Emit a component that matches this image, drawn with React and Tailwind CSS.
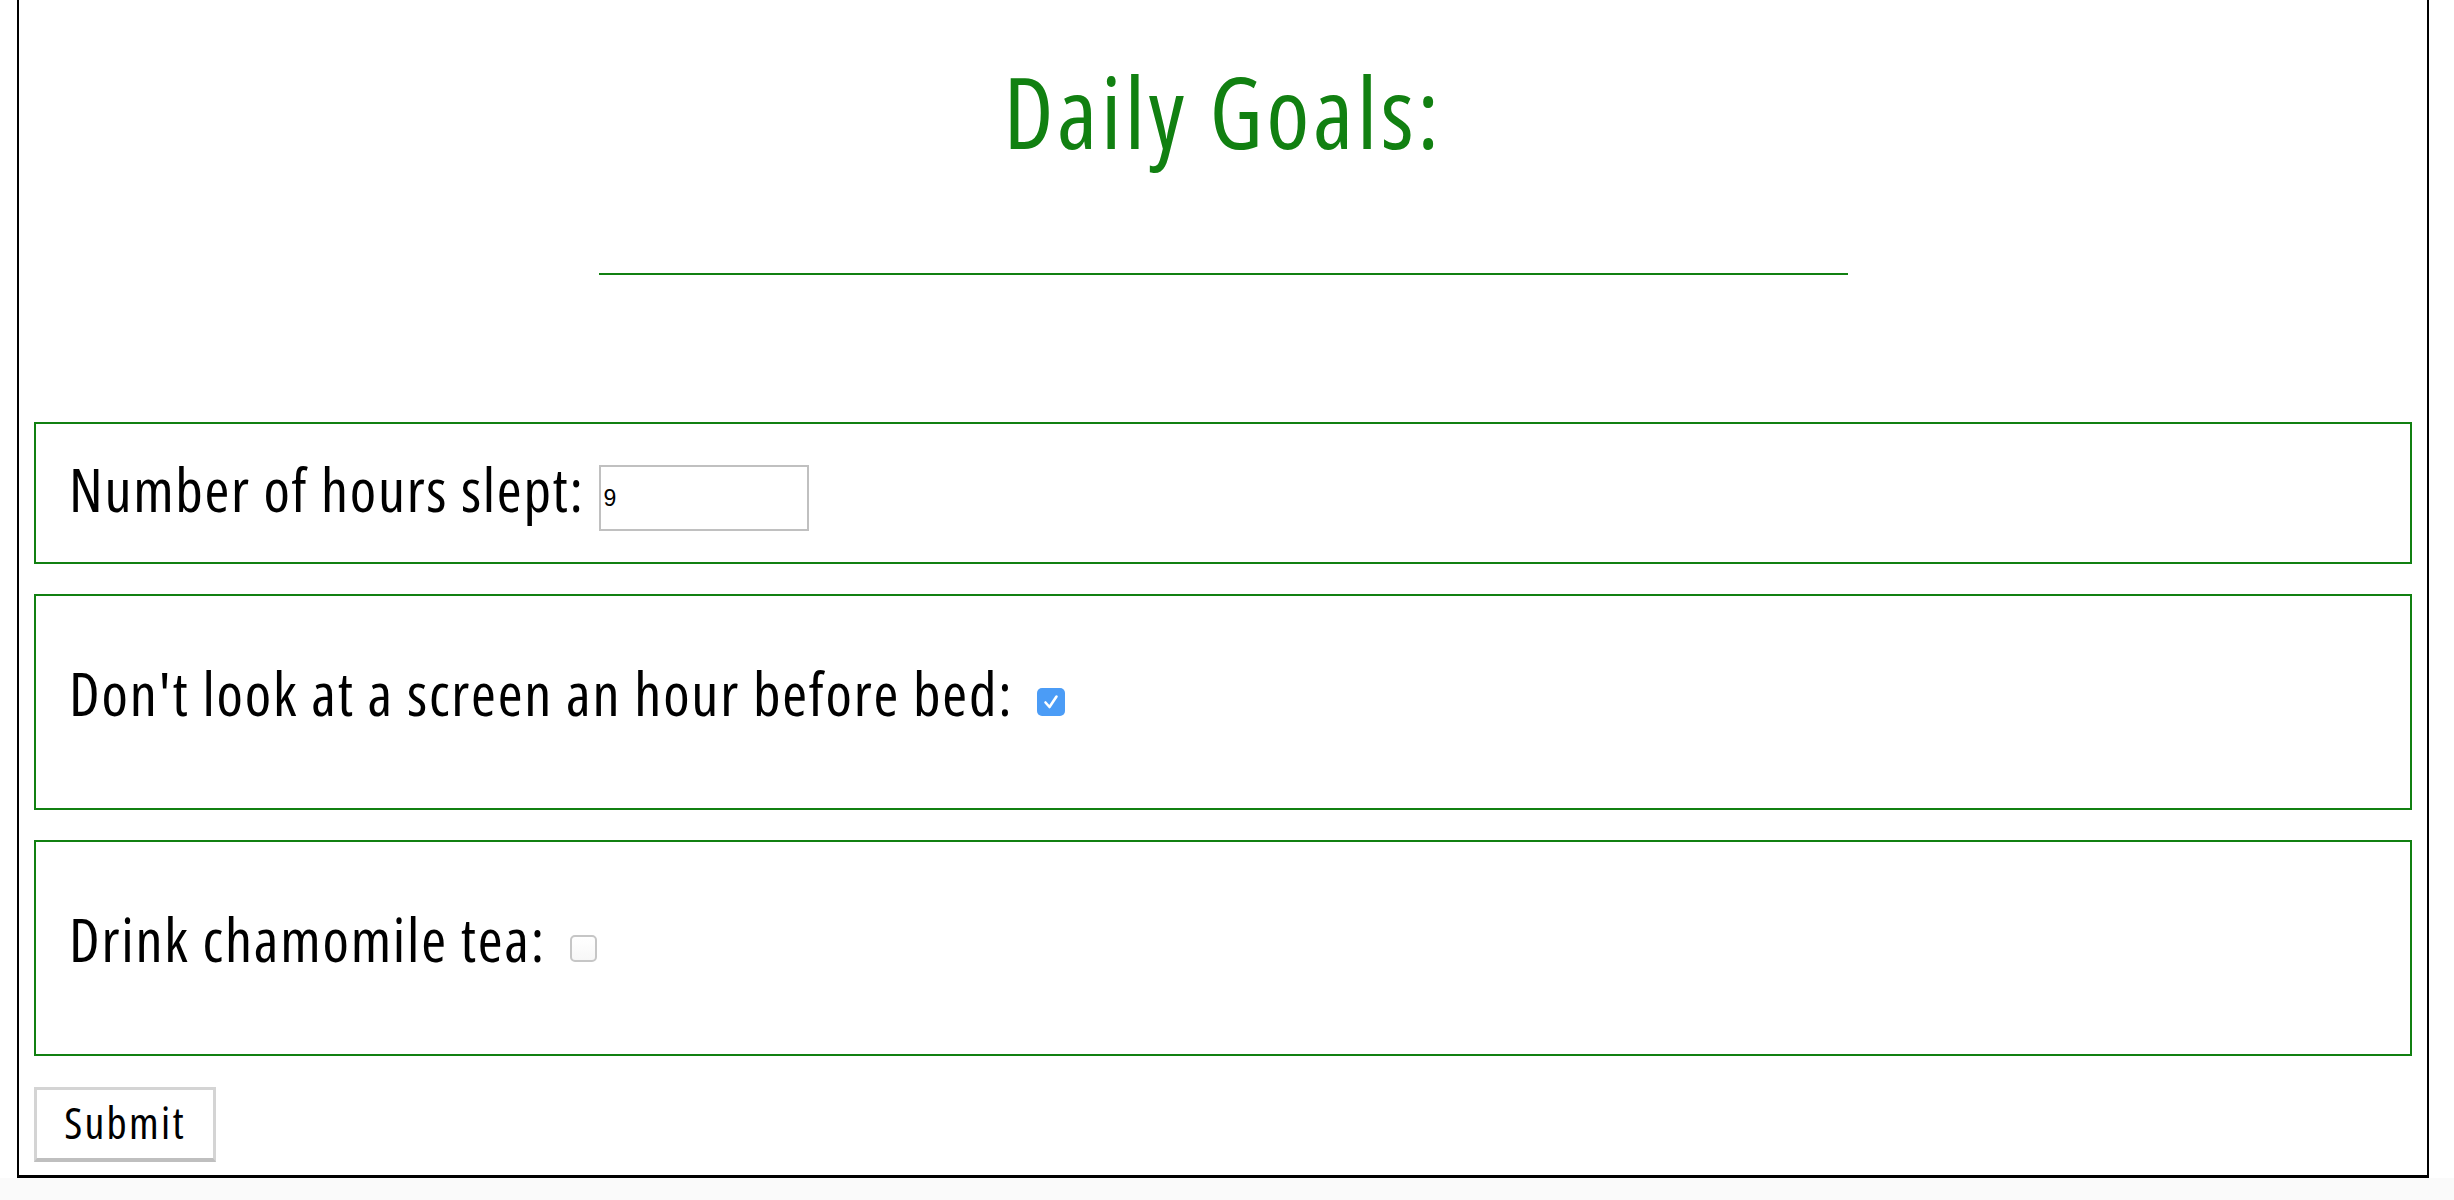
import React, { useState } from "react";

function CheckBox({ checked, onChange }) {
  if (checked) {
    return (
      <button
        type="button"
        onClick={() => onChange(false)}
        className="ml-[24px] flex h-[28px] w-[28px] shrink-0 items-center justify-center rounded-[5px] bg-[#4b9cf6]"
      >
        <svg viewBox="0 0 28 28" className="h-[28px] w-[28px]" fill="none">
          <path
            d="M8.5 14.5 L12.5 19 L19.5 8.5"
            stroke="white"
            strokeWidth="2.6"
            strokeLinecap="round"
            strokeLinejoin="round"
          />
        </svg>
      </button>
    );
  }
  return (
    <button
      type="button"
      onClick={() => onChange(true)}
      className="ml-[24px] h-[27px] w-[27px] shrink-0 rounded-[5px] border-2 border-[#c6c6c6] bg-gradient-to-b from-white to-[#f7f7f7]"
    />
  );
}

export default function App() {
  const [hours, setHours] = useState("9");
  const [noScreen, setNoScreen] = useState(true);
  const [tea, setTea] = useState(false);

  return (
    <div className="flex h-[1200px] w-full flex-col overflow-hidden bg-white font-['Open_Sans',sans-serif] font-stretch-condensed">
      <div className="ml-[17px] flex h-[1178px] w-[2412px] shrink-0 flex-col border-x-2 border-b-[3px] border-black bg-white px-[15px]">
        <h1 className="mt-[62px] text-center text-[98px] font-normal leading-none tracking-[3.6px] text-[#118011]">
          Daily Goals:
        </h1>
        <div className="mx-auto mt-[113px] h-[2px] w-[1249px] bg-[#118011]" />

        <form className="mt-[147px] flex flex-col gap-[30px] text-black" onSubmit={(e) => e.preventDefault()}>
          {/* hours slept */}
          <div className="flex h-[142px] items-center border-2 border-[#118011] pl-[33px]">
            <span className="mb-[8px] text-[60px] leading-normal tracking-[1.7px]">Number of hours slept:</span>
            <input
              value={hours}
              onChange={(e) => setHours(e.target.value)}
              className="ml-[14px] mt-[10px] h-[66px] w-[210px] border-2 border-[#c0c0c0] px-[3px] font-['Liberation_Sans',sans-serif] text-[23px] tracking-normal text-black outline-none font-stretch-normal"
            />
          </div>

          {/* screens */}
          <div className="flex h-[216px] items-center border-2 border-[#118011] pl-[33px]">
            <span className="mb-[19px] text-[60px] leading-normal tracking-[1.8px]">
              Don't look at a screen an hour before bed:
            </span>
            <CheckBox checked={noScreen} onChange={setNoScreen} />
          </div>

          {/* tea */}
          <div className="flex h-[216px] items-center border-2 border-[#118011] pl-[33px]">
            <span className="mb-[19px] text-[60px] leading-normal tracking-[1.8px]">Drink chamomile tea:</span>
            <CheckBox checked={tea} onChange={setTea} />
          </div>

          <button
            type="submit"
            className="mt-px flex h-[75px] w-[182px] items-center justify-center self-start border-[3px] border-[#d4d4d4] border-b-4 border-b-[#bfbfbf] bg-white pb-[4px] text-[44px] leading-none tracking-[2.3px] text-black"
          >
            Submit
          </button>
        </form>
      </div>
      <div className="flex-1 bg-[#fafafa]" />
    </div>
  );
}
